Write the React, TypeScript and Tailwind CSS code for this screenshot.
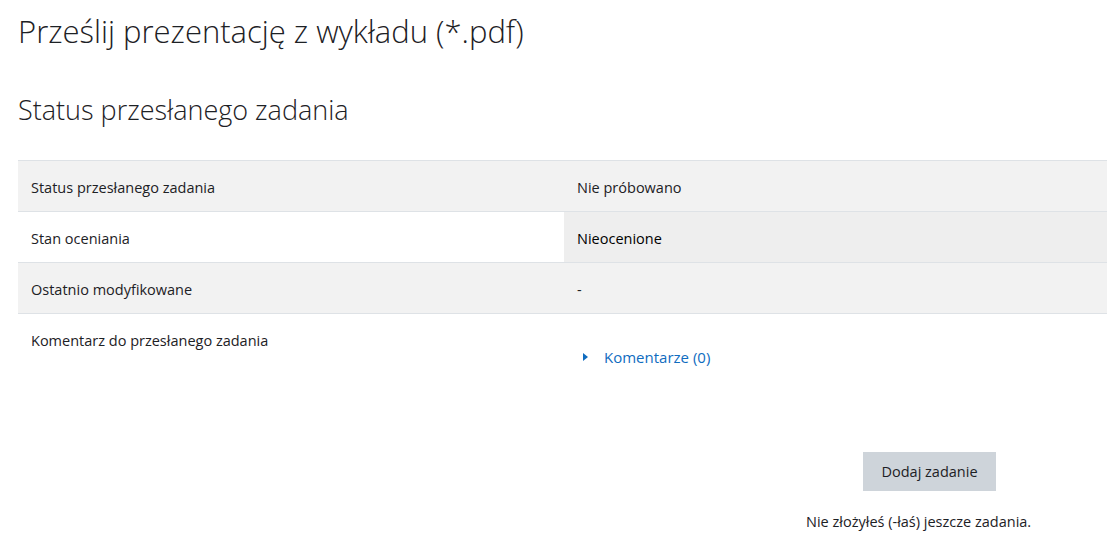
import React from "react";

const font = { fontFamily: '"Open Sans", "Noto Sans", sans-serif' };

export default function App() {
  return (
    <div className="w-[1107px] h-[554px] bg-white overflow-hidden text-[#1d2125]" style={font}>
      <div className="pl-[18px] pt-[10px]">
        <h2 className="text-[31px] font-light leading-[42px] text-[#1d2125]">Prześlij prezentację z wykładu (*.pdf)</h2>
        <h3 className="mt-[40px] text-[27px] font-light leading-[36px] text-[#1d2125]">Status przesłanego zadania</h3>
        <div className="mt-[32px] w-[1089px] text-[14.5px]">
          <div className="flex h-[51px] border-t border-[#dee2e6] bg-[#f2f2f2]">
            <div className="w-[546px] pl-[13px] pt-[3px] flex items-center">Status przesłanego zadania</div>
            <div className="flex-1 pl-[13px] pt-[3px] flex items-center">Nie próbowano</div>
          </div>
          <div className="flex h-[51px] border-t border-[#dee2e6] bg-white">
            <div className="w-[546px] pl-[13px] pt-[3px] flex items-center">Stan oceniania</div>
            <div className="flex-1 pl-[13px] pt-[3px] flex items-center bg-[#eeeeee] text-black">Nieocenione</div>
          </div>
          <div className="flex h-[51px] border-t border-[#dee2e6] bg-[#f2f2f2]">
            <div className="w-[546px] pl-[13px] pt-[3px] flex items-center">Ostatnio modyfikowane</div>
            <div className="flex-1 pl-[13px] pt-[3px] flex items-center">-</div>
          </div>
          <div className="flex h-[80px] border-t border-[#dee2e6] bg-white">
            <div className="w-[546px] pl-[13px] pt-[16px]">Komentarz do przesłanego zadania</div>
            <div className="flex-1 pl-[18px] pt-[32px] flex items-start">
              <div className="flex items-center gap-[15px] text-[#0f6cbf] text-[15px]">
                <svg width="7" height="10" viewBox="0 0 7 10" className="text-[#0f6cbf]">
                  <path d="M1 1 L6 5 L1 9 Z" fill="currentColor" />
                </svg>
                <span>Komentarze (0)</span>
              </div>
            </div>
          </div>
        </div>
        <div className="mt-[59px] flex flex-col items-start text-[14.5px]">
          <button className="ml-[845px] h-[39px] w-[133px] bg-[#ced4da] text-[#1d2125]">Dodaj zadanie</button>
          <div className="ml-[788px] mt-[20px]">Nie złożyłeś (-łaś) jeszcze zadania.</div>
        </div>
      </div>
    </div>
  );
}
